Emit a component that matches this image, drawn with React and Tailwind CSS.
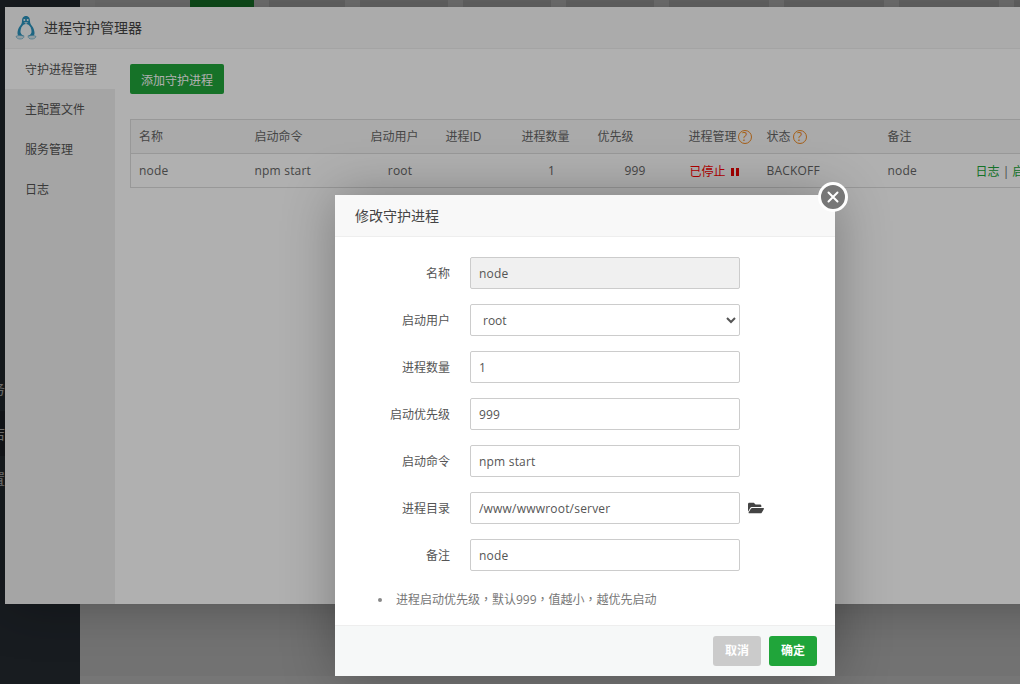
import { FaFolderOpen } from 'react-icons/fa';

const navItems = ['首页', '网站', 'FTP', '数据库', '监控', '安全', '文件', '终端', '计划任务', '软件商店', '面板设置', '退出'];
const sideItems = ['守护进程管理', '主配置文件', '服务管理', '日志'];

const AskIcon = () => (
    <span className="ml-px inline-flex h-[14px] w-[14px] items-center justify-center rounded-full border border-[#f08a24] text-xs leading-none text-[#f08a24]">?</span>
);

const Tux = () => (
    <svg width="22" height="25" viewBox="0 0 22 25" className="shrink-0">
        <path d="M11 1C8 1 7 3.500 7 6c0 2-.5 3-2 5-1.500 2-2.500 4.500-2.500 7 0 1.500.5 2.500 1.500 3h14c1-.5 1.500-1.500 1.500-3 0-2.500-1-5-2.500-7-1.500-2-2-3-2-5 0-2.500-1-5-4-5z" fill="#2a93bd" />
        <path d="M11 9c-2.800 0-5.500 3.500-5.500 7.500 0 2.500 2 4.500 5.500 4.500s5.500-2 5.500-4.500C16.500 12.500 13.800 9 11 9z" fill="#f4f8fa" />
        <circle cx="9.300" cy="5" r="1" fill="#f4f8fa" />
        <circle cx="12.700" cy="5" r="1" fill="#f4f8fa" />
        <path d="M9 7.200h4l-2 1.800z" fill="#e6ecef" />
        <path d="M1 21.500c1.500-1.200 5-1.500 8-.2 0 1.700-1.500 2.700-4 2.700-2 0-3.500-1-4-2.500zM21 21.500c-1.500-1.200-5-1.500-8-.2 0 1.700 1.500 2.700 4 2.700 2 0 3.500-1 4-2.500z" fill="#d5e4ea" stroke="#5fa9c6" strokeWidth=".7" />
    </svg>
);

const FormRow = ({ label, children, extra }) => (
    <div className="mb-[15px] flex h-8 items-center">
        <label className="w-[115px] shrink-0 pt-[2px] text-right text-xs text-[#555]">{label}</label>
        <div className="ml-5 h-8 w-[270px] shrink-0">{children}</div>
        {extra}
    </div>
);

const inputCls = 'h-8 w-full rounded-[2px] border border-[#ccc] px-2 text-xs tracking-[0.2px] text-[#555] outline-none';

const App = () => {
    return (
        <div className="relative flex h-[684px] w-[1020px] overflow-hidden bg-white font-['Open_Sans','Noto_Sans_CJK_SC',sans-serif]">
            {/* page behind the layers */}
            <aside className="w-20 shrink-0 bg-[#333c44] pt-[6px] text-sm text-white">
                {navItems.map((item) => (
                    <div key={item} className={`flex h-[45px] items-center overflow-hidden whitespace-nowrap ${item === '软件商店' ? 'bg-[#292f35]' : ''}`}>
                        <span className="ml-[-51px]">{item}</span>
                    </div>
                ))}
            </aside>
            <main className="flex flex-1 flex-col bg-[#f5f5f5]">
                <div className="flex h-10 shrink-0 pl-[15px]">
                    <div className="w-[95px] bg-[#ececec]" />
                    <div className="w-16 bg-[#20a53a]" />
                    <div className="ml-[15px] w-[76px] bg-[#dcdcdc]" />
                    <div className="ml-[15px] w-[88px] bg-[#dcdcdc]" />
                    <div className="ml-[15px] w-[88px] bg-[#dcdcdc]" />
                    <div className="ml-[15px] w-[88px] bg-[#dcdcdc]" />
                    <div className="ml-[15px] w-[100px] bg-[#dcdcdc]" />
                    <div className="ml-[15px] w-[100px] bg-[#dcdcdc]" />
                    <div className="ml-[15px] w-[100px] bg-[#dcdcdc]" />
                    <div className="ml-[15px] w-[100px] bg-[#dcdcdc]" />
                </div>
                <div className="flex-1 bg-[#eeeeee]" />
                <div className="h-2 shrink-0" />
            </main>
            <div className="absolute inset-0 bg-black/30" />

            {/* manager window */}
            <div className="absolute left-[5px] top-[7px] flex h-[597px] w-[1200px] flex-col bg-white shadow-[1px_1px_50px_rgba(0,0,0,0.3)]">
                <div className="flex h-[42px] shrink-0 items-center gap-[7px] border-b border-[#eee] bg-[#f8f8f8] pl-[10px] text-sm text-[#444]">
                    <Tux />
                    <span>进程守护管理器</span>
                </div>
                <div className="flex flex-1">
                    <div className="w-[110px] shrink-0 bg-[#f0f0f0] text-xs text-[#555]">
                        {sideItems.map((item, i) => (
                            <div key={item} className={`flex h-10 items-center pl-5 pt-[2px] ${i === 0 ? 'bg-white' : ''}`}>{item}</div>
                        ))}
                    </div>
                    <div className="flex-1 pl-[15px] pt-[15px]">
                        <button className="h-[30px] w-[94px] rounded-[2px] bg-[#20a53a] pt-[3px] text-xs text-white">添加守护进程</button>
                        <table className="mt-[25px] w-[1060px] table-fixed border-collapse border border-[#ddd] text-left text-xs text-[#666]">
                            <thead className="bg-[#f6f6f6]">
                                <tr className="h-[34px] border-b border-[#ddd]">
                                    <th className="w-[116px] pl-2 font-normal">名称</th>
                                    <th className="w-[116px] pl-2 font-normal">启动命令</th>
                                    <th className="w-[75px] pl-2 font-normal">启动用户</th>
                                    <th className="w-[76px] pl-2 font-normal">进程ID</th>
                                    <th className="w-[76px] pl-2 font-normal">进程数量</th>
                                    <th className="w-[91px] pl-2 font-normal">优先级</th>
                                    <th className="w-[78px] pl-2 font-normal"><span className="flex items-center">进程管理<AskIcon /></span></th>
                                    <th className="w-[121px] pl-2 font-normal"><span className="flex items-center">状态<span className="ml-px"><AskIcon /></span></span></th>
                                    <th className="w-[88px] pl-2 font-normal">备注</th>
                                    <th className="pl-2 font-normal" />
                                </tr>
                            </thead>
                            <tbody className="tracking-[0.2px]">
                                <tr className="h-[34px]">
                                    <td className="pl-2">node</td>
                                    <td className="pl-2">npm start</td>
                                    <td className="text-center">root</td>
                                    <td />
                                    <td className="text-center">1</td>
                                    <td className="text-center">999</td>
                                    <td className="pl-[9px]">
                                        <span className="flex items-center pt-[2px] tracking-normal text-[#f00]">
                                            已停止
                                            <span className="ml-[5px] flex gap-[2px]">
                                                <i className="h-2 w-[3px] bg-[#e00]" />
                                                <i className="h-2 w-[3px] bg-[#e00]" />
                                            </span>
                                        </span>
                                    </td>
                                    <td className="pl-2">BACKOFF</td>
                                    <td className="pl-2">node</td>
                                    <td className="whitespace-nowrap pl-2 pt-[2px] tracking-normal text-[#20a53a]">日志 <span className="text-[#666]">|</span> 启动 <span className="text-[#666]">|</span> 编辑 <span className="text-[#666]">|</span> 删除</td>
                                </tr>
                            </tbody>
                        </table>
                    </div>
                </div>
            </div>
            <div className="absolute inset-0 bg-black/[0.31]" />

            {/* edit dialog */}
            <div className="absolute left-[335px] top-[195px] flex h-[481px] w-[500px] flex-col bg-white shadow-[1px_1px_50px_rgba(0,0,0,0.3)]">
                <div className="flex h-[42px] shrink-0 items-center border-b border-[#eee] bg-[#f8f8f8] pl-5 text-sm text-[#444]">修改守护进程</div>
                <div className="flex-1 pt-5">
                    <FormRow label="名称"><input className={`${inputCls} bg-[#f0f0f0]`} defaultValue="node" disabled /></FormRow>
                    <FormRow label="启动用户">
                        <select className="h-8 w-full rounded-[2px] border border-[#ccc] bg-white px-2 text-xs text-[#555] outline-none" defaultValue="root">
                            <option>root</option>
                        </select>
                    </FormRow>
                    <FormRow label="进程数量"><input className={`${inputCls} bg-white`} defaultValue="1" /></FormRow>
                    <FormRow label="启动优先级"><input className={`${inputCls} bg-white`} defaultValue="999" /></FormRow>
                    <FormRow label="启动命令"><input className={`${inputCls} bg-white`} defaultValue="npm start" /></FormRow>
                    <FormRow label="进程目录" extra={<FaFolderOpen className="ml-2 text-[16px] text-[#444]" />}><input className={`${inputCls} bg-white`} defaultValue="/www/wwwroot/server" /></FormRow>
                    <FormRow label="备注"><input className={`${inputCls} bg-white`} defaultValue="node" /></FormRow>
                    <ul className="mt-5 pl-[43px] pt-px font-['Open_Sans','Noto_Sans_CJK_TC',sans-serif] text-xs text-[#777]">
                        <li className="flex items-center">
                            <span className="mr-[14px] h-1 w-1 rounded-full bg-[#888]" />
                            进程启动优先级，默认999，值越小，越优先启动
                        </li>
                    </ul>
                </div>
                <div className="flex h-[51px] shrink-0 items-center justify-end gap-2 border-t border-[#eee] bg-[#f6f8f8] pr-[18px]">
                    <button className="h-[30px] w-12 rounded-[3px] bg-[#cbcbcb] text-xs font-bold text-white">取消</button>
                    <button className="h-[30px] w-12 rounded-[3px] bg-[#20a53a] text-xs font-bold text-white">确定</button>
                </div>
                <button className="absolute right-[-13px] top-[-13px] flex h-[30px] w-[30px] items-center justify-center rounded-full border-[3px] border-white bg-[#777]">
                    <svg width="12" height="12" viewBox="0 0 12 12"><path d="M1.500 1.500l9 9M10.500 1.500l-9 9" stroke="#fff" strokeWidth="2" strokeLinecap="round" /></svg>
                </button>
            </div>
        </div>
    );
};

export default App;
